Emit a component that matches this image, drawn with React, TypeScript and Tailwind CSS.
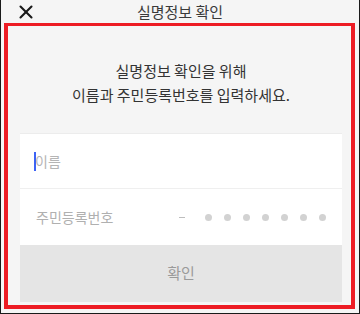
import { X } from "lucide-react";

const font = { fontFamily: '"Noto Sans CJK KR", "Noto Sans", sans-serif' };

export default function App() {
  return (
    <div
      className="w-[360px] h-[314px] bg-[#f5f5f5] border-x border-b border-[#1a1a1a] flex flex-col"
      style={font}
    >
      {/* Header */}
      <div className="relative h-[23px] flex items-center justify-center">
        <X className="absolute left-[14px] top-[1px] h-[22px] w-[22px] text-[#1a1a1a]" strokeWidth={2.3} />
        <span className="text-[15px] leading-none text-[#3a3a3a]">실명정보 확인</span>
      </div>

      {/* Highlighted area */}
      <div className="flex-1 ml-[3px] mr-[4px] mb-[4px] border-[4px] border-t-[3px] border-[#ed1c24] flex flex-col pt-[33px] pb-[3px] pl-[12px] pr-[9px]">
        <p className="text-center text-[15px] leading-[24px] text-[#333]">
          실명정보 확인을 위해
          <br />
          이름과 주민등록번호를 입력하세요.
        </p>

        <div className="mt-[26px] bg-white border-t border-[#ececec] flex flex-col">
          <div className="h-[55px] flex items-center pl-[14px] border-b border-[#efefef]">
            <span className="w-[2px] h-[19px] bg-[#3d63f5]" />
            <span className="text-[14px] text-[#b5b5b5] -ml-[1px]">이름</span>
          </div>
          <div className="h-[56px] flex items-center pl-[16px] pr-[16px]">
            <span className="text-[14px] text-[#b0b0b0]">주민등록번호</span>
            <span className="ml-auto w-[6px] h-[1px] bg-[#bdbdbd]" />
            <div className="ml-[20px] flex gap-[12px]">
              {Array.from({ length: 7 }).map((_, i) => (
                <span key={i} className="w-[7px] h-[7px] rounded-full bg-[#d2d2d2]" />
              ))}
            </div>
          </div>
        </div>

        <button className="h-[57px] bg-[#e5e5e5] text-[15px] text-[#9a9a9a]">확인</button>
      </div>
    </div>
  );
}
